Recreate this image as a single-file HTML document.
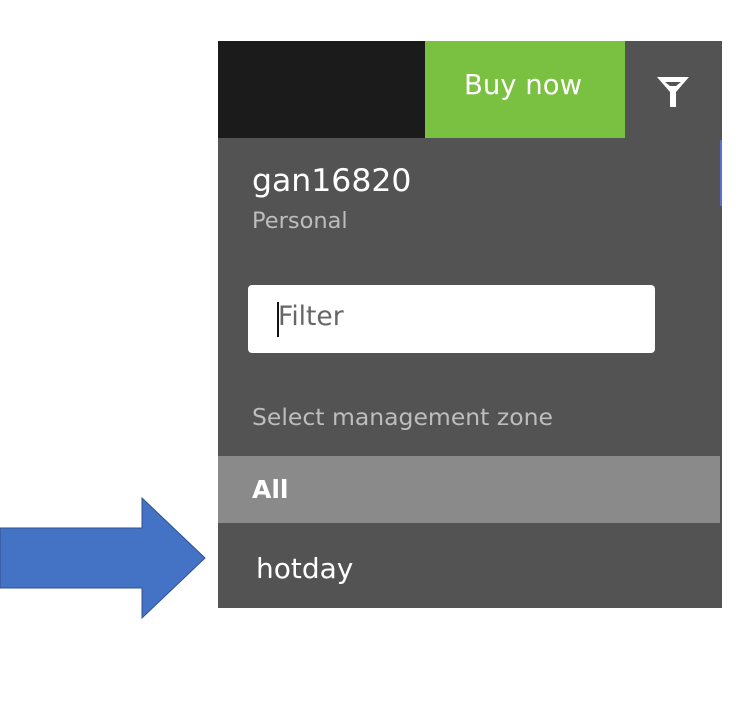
<!DOCTYPE html>
<html><head><style>
body{margin:0;width:752px;height:706px;background:#fff;position:relative;overflow:hidden;font-family:"DejaVu Sans","Liberation Sans",sans-serif}
div{position:absolute}
.t{white-space:nowrap;line-height:1}
</style></head><body>
<div style="left:218px;top:41px;width:504px;height:567px;background:#535353"></div>
<div style="left:218px;top:41px;width:207px;height:97px;background:#1b1b1b"></div>
<div style="left:425px;top:41px;width:200px;height:97px;background:#7ac142"></div>
<div class="t" style="left:464px;top:72px;font-size:27.5px;color:#fff">Buy now</div>
<svg style="position:absolute;left:655px;top:75px" width="36" height="34" viewBox="0 0 36 34"><path d="M2 2H34L21 17V32H15V17Z" fill="#fff"/><path d="M10 7H26L21 11H15Z" fill="#535353"/></svg>
<div style="left:720px;top:140px;width:2px;height:66px;background:#5a6fd0"></div>
<div class="t" style="left:252px;top:166px;font-size:31.5px;color:#fff">gan16820</div>
<div class="t" style="left:252px;top:210px;font-size:22.5px;color:#bdbdbd">Personal</div>
<div style="left:248px;top:285px;width:407px;height:68px;background:#fff;border-radius:4px"></div>
<div style="left:277px;top:302px;width:2px;height:35px;background:#111"></div>
<div class="t" style="left:278px;top:304px;font-size:26.5px;color:#666">Filter</div>
<div class="t" style="left:252px;top:406px;font-size:23.5px;color:#bdbdbd">Select management zone</div>
<div style="left:218px;top:456px;width:502px;height:67px;background:#8a8a8a"></div>
<div class="t" style="left:252px;top:477px;font-size:25px;color:#fff;font-weight:bold">All</div>
<div class="t" style="left:256px;top:555px;font-size:28px;color:#fff">hotday</div>
<svg style="position:absolute;left:0;top:496px" width="210" height="124"><path d="M0 32H142V2L205 62L142 122V92H0Z" fill="#4472c4" stroke="#2f528f" stroke-width="1"/></svg>
</body></html>
